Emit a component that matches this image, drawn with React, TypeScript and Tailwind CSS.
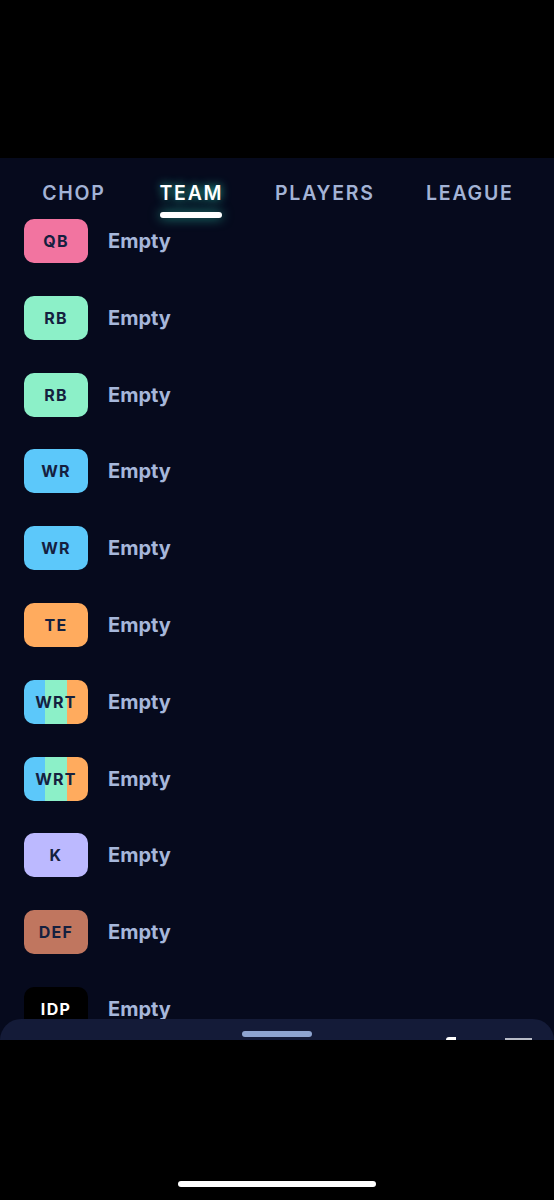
import React from 'react';

type Slot = {
  pos: string;
  color?: string;
  dark?: boolean;
};

const slots: Slot[] = [
  { pos: 'QB', color: 'bg-[#f274a0]' },
  { pos: 'RB', color: 'bg-[#8cf0c8]' },
  { pos: 'RB', color: 'bg-[#8cf0c8]' },
  { pos: 'WR', color: 'bg-[#5cc8fa]' },
  { pos: 'WR', color: 'bg-[#5cc8fa]' },
  { pos: 'TE', color: 'bg-[#ffab5e]' },
  { pos: 'WRT' },
  { pos: 'WRT' },
  { pos: 'K', color: 'bg-[#bcb9ff]' },
  { pos: 'DEF', color: 'bg-[#c0765f]' },
  { pos: 'IDP', color: 'bg-black', dark: true },
];

// width of each tab cell, so labels sit centred where the app puts them
const tabs = [
  { label: 'CHOP', w: 'w-[106px]' },
  { label: 'TEAM', w: 'w-[129px]' },
  { label: 'PLAYERS', w: 'w-[138px]' },
  { label: 'LEAGUE', w: 'w-[152px]' },
];

const Badge: React.FC<{ slot: Slot }> = ({ slot }) => {
  if (slot.pos === 'WRT') {
    return (
      <div className="relative w-16 h-11 rounded-[10px] overflow-hidden flex shrink-0">
        <div className="w-[21px] bg-[#5cc8fa]"></div>
        <div className="w-[22px] bg-[#8cf0c8]"></div>
        <div className="flex-1 bg-[#ffab5e]"></div>
        <div className="absolute inset-0 flex items-center justify-center text-[16px] font-bold tracking-[0.08em] text-[#15203f]">
          WRT
        </div>
      </div>
    );
  }
  return (
    <div
      className={`w-16 h-11 rounded-[10px] shrink-0 flex items-center justify-center text-[16px] font-bold tracking-[0.08em] ${slot.color} ${
        slot.dark ? 'text-white' : 'text-[#15203f]'
      }`}
    >
      {slot.pos}
    </div>
  );
};

const App: React.FC = () => {
  return (
    <div className="w-[554px] h-[1200px] bg-black flex flex-col font-['Inter',sans-serif] overflow-hidden">
      <div className="h-[158px] shrink-0"></div>
      <div className="relative h-[882px] shrink-0 bg-[#060a1d] overflow-hidden">
        <div className="h-[60px] flex pl-[20px]">
          {tabs.map((t) => {
            const active = t.label === 'TEAM';
            return (
              <div key={t.label} className={`${t.w} flex flex-col items-center pt-[23px]`}>
                <div
                  className={`text-[19.5px] leading-6 font-semibold tracking-[0.09em] pl-[0.09em] ${
                    active
                      ? 'text-white [text-shadow:0_0_10px_rgba(45,212,180,0.9)]'
                      : 'text-[#a3b3d6]'
                  }`}
                >
                  {t.label}
                </div>
                {active && (
                  <div className="mt-[7px] w-[62px] h-[6px] rounded-full bg-white shadow-[0_0_12px_rgba(45,212,180,0.7)]"></div>
                )}
              </div>
            );
          })}
        </div>
        <div className="flex flex-col gap-[32.8px] pt-[1px] pl-6">
          {slots.map((s, i) => (
            <div key={i} className="flex items-center gap-5">
              <Badge slot={s} />
              <div className="text-[20px] font-bold text-[#a6b7da]">Empty</div>
            </div>
          ))}
        </div>
        <div className="absolute left-0 right-0 bottom-0 h-[21px] rounded-t-[26px] bg-[#141b38] flex justify-center">
          <div className="mt-[12px] w-[70px] h-[6px] rounded-full bg-[#8ea4d0]"></div>
          <div className="absolute left-[446px] bottom-0 w-[10px] h-[3px] rounded-tl-full bg-white"></div>
          <div className="absolute left-[505px] bottom-0 w-[27px] h-[2px] bg-[#b8bcc8]"></div>
        </div>
      </div>
      <div className="flex-1 flex flex-col justify-end items-center pb-[13px]">
        <div className="w-[198px] h-[6px] rounded-full bg-white"></div>
      </div>
    </div>
  );
};

export default App;
